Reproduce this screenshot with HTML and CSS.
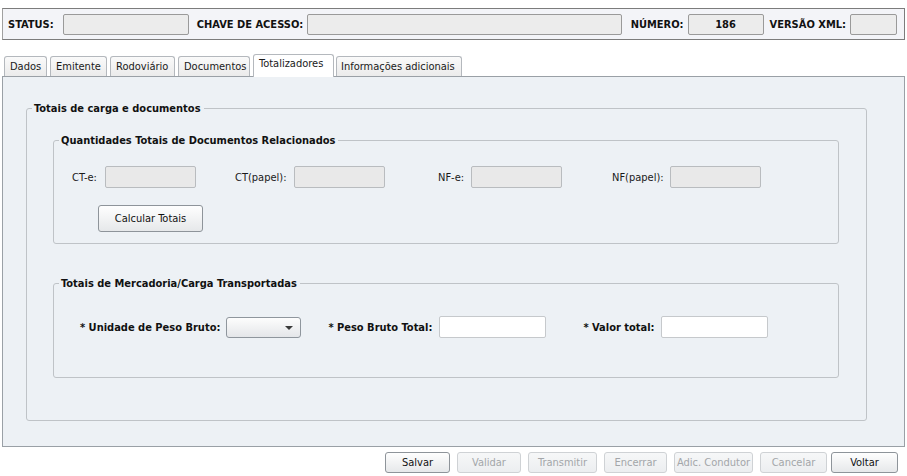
FILE: index.html
```html
<!DOCTYPE html>
<html lang="pt-BR">
<head>
    <meta charset="UTF-8">
    <meta name="viewport" content="width=device-width, initial-scale=1.0">
    <title>MDF-e - Totalizadores</title>
    <link rel="stylesheet" href="styles.css">
</head>
<body>
    <div class="header">
        <label class="head-label lbl-status">STATUS:</label>
        <input type="text" class="head-input status" disabled>
        <label class="head-label lbl-chave">CHAVE DE ACESSO:</label>
        <input type="text" class="head-input chave" disabled>
        <label class="head-label lbl-numero">NÚMERO:</label>
        <input type="text" class="head-input numero" value="186" disabled>
        <label class="head-label lbl-versao">VERSÃO XML:</label>
        <input type="text" class="head-input versao" disabled>
    </div>

    <div class="tabs">
        <div class="tab">Dados</div>
        <div class="tab">Emitente</div>
        <div class="tab">Rodoviário</div>
        <div class="tab">Documentos</div>
        <div class="tab active">Totalizadores</div>
        <div class="tab">Informações adicionais</div>
    </div>

    <div class="panel">
        <fieldset class="group outer">
            <legend>Totais de carga e documentos</legend>

            <fieldset class="group inner docs">
                <legend>Quantidades Totais de Documentos Relacionados</legend>
                <div class="row">
                    <label class="lbl lbl-cte">CT-e:</label>
                    <input type="text" class="field small" disabled>
                    <label class="lbl lbl-ct">CT(papel):</label>
                    <input type="text" class="field small" disabled>
                    <label class="lbl lbl-nfe">NF-e:</label>
                    <input type="text" class="field small" disabled>
                    <label class="lbl lbl-nf">NF(papel):</label>
                    <input type="text" class="field small" disabled>
                </div>
                <button class="btn calc">Calcular Totais</button>
            </fieldset>

            <fieldset class="group inner carga">
                <legend>Totais de Mercadoria/Carga Transportadas</legend>
                <div class="row">
                    <label class="req req-un">* Unidade de Peso Bruto:</label>
                    <div class="select"><span class="arrow"></span></div>
                    <label class="req req-peso">* Peso Bruto Total:</label>
                    <input type="text" class="field white">
                    <label class="req req-valor">* Valor total:</label>
                    <input type="text" class="field white">
                </div>
            </fieldset>
        </fieldset>
    </div>

    <div class="actions">
        <button class="btn act">Salvar</button>
        <button class="btn act" disabled>Validar</button>
        <button class="btn act" disabled>Transmitir</button>
        <button class="btn act" disabled>Encerrar</button>
        <button class="btn act" disabled>Adic. Condutor</button>
        <button class="btn act" disabled>Cancelar</button>
        <button class="btn act">Voltar</button>
    </div>
</body>
</html>
```

FILE: styles.css
```css
* {
    margin: 0;
    padding: 0;
    box-sizing: border-box;
    font-family: 'DejaVu Sans Condensed', 'DejaVu Sans', Tahoma, sans-serif;
}

body {
    background: #ffffff;
    color: #1a1a1a;
    font-size: 11px;
    width: 907px;
    height: 476px;
    overflow: hidden;
}

/* cabecalho */
.header {
    margin: 8px 2px 0 2px;
    height: 32px;
    border: 1px solid #7c7c7c;
    border-left-color: #a0a0a0;
    background: #f3f4f8;
    display: flex;
    align-items: center;
    padding: 0 7px 0 5px;
}

.head-label {
    font-weight: bold;
    font-size: 11px;
    color: #111;
    margin-right: 5px;
    white-space: nowrap;
    flex-shrink: 0;
}

.lbl-status { margin-right: 9px; }
.lbl-chave { margin-right: 4px; }
.lbl-numero { margin-right: 4px; }
.lbl-versao { margin-right: 4px; }

.head-input {
    flex-shrink: 0;
    height: 21px;
    border: 1px solid #9a9a9a;
    border-radius: 2px;
    background: #ececec;
    font-size: 11px;
    font-weight: bold;
    text-align: center;
    color: #111;
    margin-right: 8px;
}

.status { width: 126px; }
.chave { flex: 1; min-width: 0; margin-right: 9px; }
.numero { width: 76px; margin-right: 6px; }
.versao { width: 47px; margin-right: 0; }

/* abas */
.tabs {
    display: flex;
    align-items: flex-end;
    margin-top: 15px;
    padding-left: 4px;
    gap: 3px;
    height: 21px;
}

.tab {
    height: 20px;
    border: 1px solid #b4b8bd;
    border-bottom: none;
    border-radius: 3px 3px 0 0;
    background: linear-gradient(#fafafa, #ebebeb);
    padding: 0 5px;
    line-height: 20px;
    color: #1a1a1a;
}

.tab:nth-child(1) { width: 43px; }
.tab:nth-child(2) { width: 57px; }
.tab:nth-child(3) { width: 65px; }
.tab:nth-child(4) { width: 72px; }
.tab:nth-child(6) { width: 126px; padding: 0 4px; margin-left: -1px; }

.tab.active {
    width: 81px;
    height: 23px;
    background: #ffffff;
    line-height: 18px;
    padding: 0 5px;
    margin-bottom: -1px;
}

.panel {
    margin: 0 2px;
    height: 371px;
    border: 1px solid #9aa0a6;
    background: #edf1f5;
    padding: 25px 37px 0 23px;
}

/* grupos */
.group {
    border: 1px solid #bfc3c7;
    border-radius: 3px;
}

.group legend {
    font-weight: bold;
    padding: 0 3px 0 2px;
    margin-left: 5px;
    color: #111;
}

.outer {
    height: 319px;
    padding: 19px 27px 0 26px;
}

.outer > legend {
    margin-left: -21px;
}

.inner {
    padding: 0;
}

.docs {
    height: 110px;
}

.carga {
    height: 101px;
    margin-top: 33px;
}

.row {
    display: flex;
    align-items: center;
}

.docs .row {
    margin-top: 19px;
}

.carga .row {
    margin-top: 26px;
}

.lbl {
    color: #1a1a1a;
    flex-shrink: 0;
}

.lbl-cte { margin-left: 18px; width: 33px; }
.lbl-ct { margin-left: 39px; width: 59px; }
.lbl-nfe { margin-left: 53px; width: 33px; }
.lbl-nf { margin-left: 50px; width: 58px; }

.field {
    height: 22px;
    border: 1px solid #b9bcbf;
    border-radius: 2px;
}

.field.small {
    width: 91px;
    background: #e9e9e9;
}

.field.white {
    width: 107px;
    background: #ffffff;
    border-color: #c6c9cc;
}

.req {
    font-weight: bold;
    color: #111;
    margin-right: 6px;
}

.req-un { margin-left: 26px; }
.req-peso { margin-left: 27px; margin-right: 7px; }
.req-valor { margin-left: 37px; margin-right: 6px; }

.select {
    width: 75px;
    height: 21px;
    border: 1px solid #8f969d;
    border-radius: 3px;
    background: linear-gradient(#fdfdfd, #e4e6e9);
    position: relative;
}

.arrow {
    position: absolute;
    right: 7px;
    top: 8px;
    width: 0;
    height: 0;
    border-left: 4px solid transparent;
    border-right: 4px solid transparent;
    border-top: 4px solid #3a3a3a;
}

/* botoes */
.btn {
    font-size: 11px;
    color: #111;
    border: 1px solid #8e949a;
    border-radius: 3px;
    background: linear-gradient(#fefefe, #e6e8ea);
    cursor: pointer;
}

.calc {
    display: block;
    width: 105px;
    height: 27px;
    margin: 17px 0 0 44px;
}

.actions {
    display: flex;
    justify-content: flex-end;
    gap: 7px;
    padding-right: 9px;
    margin-top: 5px;
}

.act {
    height: 21px;
    width: 65px;
}

.act:nth-child(2) { width: 64px; }
.act:nth-child(3) { width: 69px; }
.act:nth-child(4) { width: 63px; }
.act:nth-child(5) { width: 79px; }
.act:nth-child(6) { width: 67px; }
.act:nth-child(7) { width: 67px; margin-left: -3px; }

.btn:disabled {
    color: #a3a6a9;
    border-color: #cfd2d5;
    background: linear-gradient(#f6f7f8, #eceef0);
    cursor: default;
}
```
